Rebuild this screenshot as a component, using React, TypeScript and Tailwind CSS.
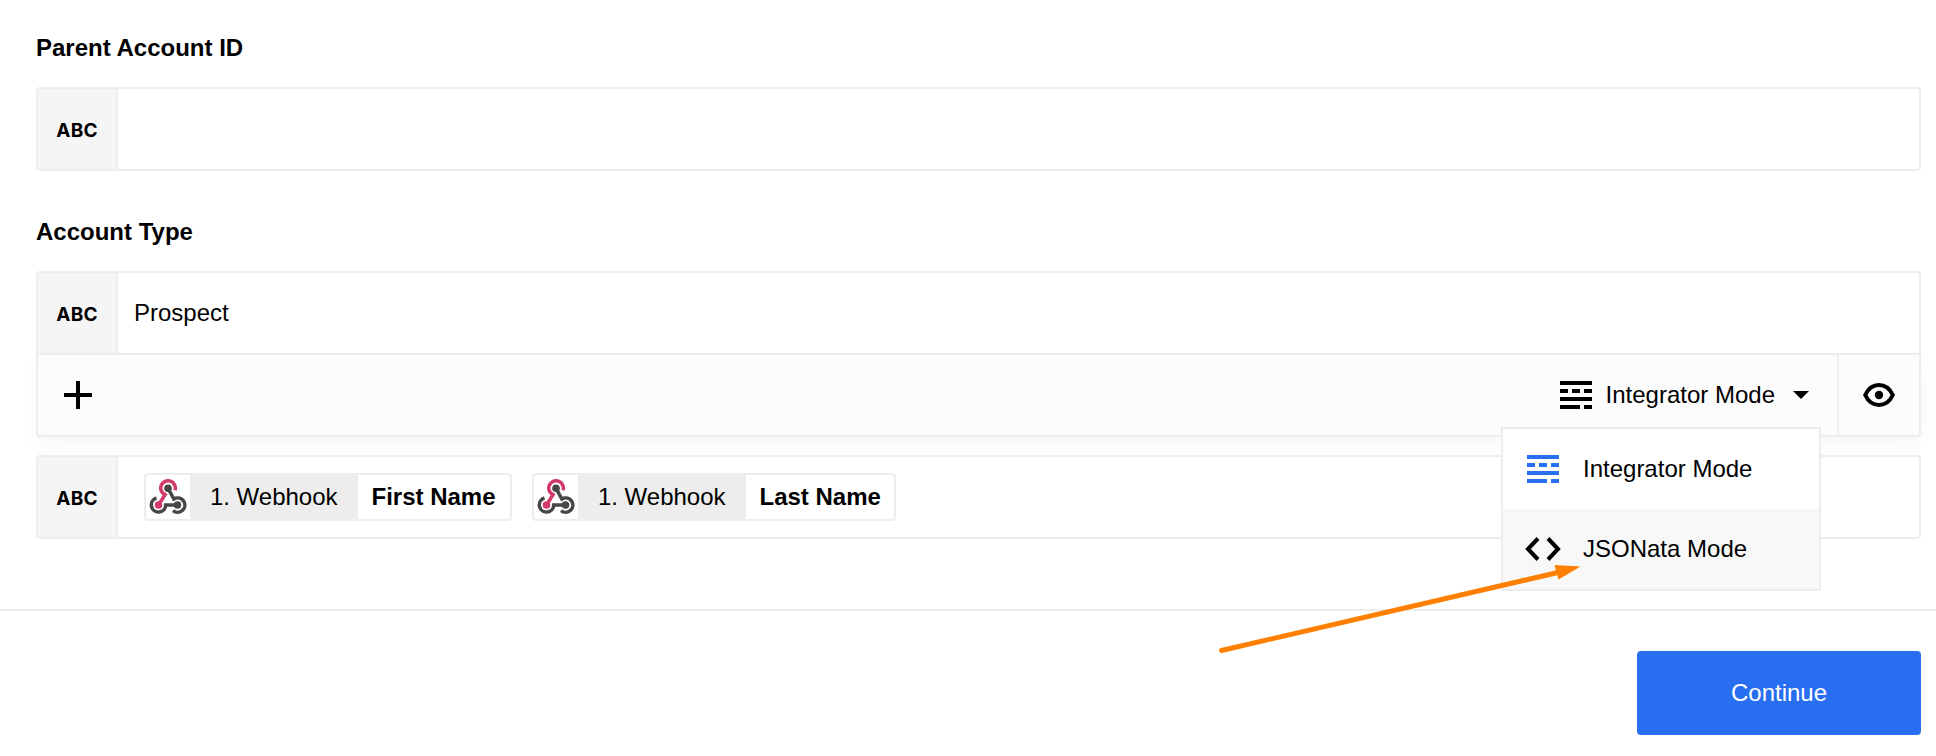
import type { ReactNode } from "react";

function ModeIcon({ className }: { className?: string }) {
  return (
    <svg width="33" height="28" viewBox="0 0 33 28" fill="currentColor" shapeRendering="crispEdges" className={className}>
      <path d="M0 0h32v4H0zM0 8h8v4H0zM12 8h8v4h-8zM24 8h8v4h-8zM0 16h32v4H0zM0 24h20v4H0zM24 24h8v4h-8z" />
    </svg>
  );
}

function WebhookIcon() {
  return (
    <svg width="38" height="36" viewBox="0 0 38 36" fill="none" strokeWidth="3.5">
      <path d="M9.500 26 L16 15.700 A7.300 7.300 0 1 1 26 11.300" stroke="#d23a68" />
      <circle cx="9.500" cy="26" r="3.800" fill="#d23a68" />
      <path d="M7.500 19 A7.200 7.200 0 1 0 16.700 26 H28.500" stroke="#474747" />
      <path d="M19 9.200 L24.800 20 A7.200 7.200 0 1 1 24 31.600" stroke="#474747" />
      <circle cx="19" cy="9.200" r="3.800" fill="#474747" />
      <circle cx="28.500" cy="26" r="3.800" fill="#474747" />
    </svg>
  );
}

function TypeCell() {
  return (
    <div className="flex w-20 shrink-0 items-center justify-center rounded-l-[3px] border-r-2 border-[#ededed] bg-[#f5f5f5] pt-[3px] font-[Inter,sans-serif] text-[19px] font-bold tracking-[0.3px]">
      ABC
    </div>
  );
}

function Field({ children, className = "" }: { children?: ReactNode; className?: string }) {
  return (
    <div className={"flex h-[84px] border-2 border-[#ededed] bg-white " + className}>
      <TypeCell />
      <div className="flex grow items-center">{children}</div>
    </div>
  );
}

function Chip({ label, className }: { label: string; className: string }) {
  return (
    <div className={"flex h-12 overflow-hidden rounded-[4px] border-2 border-[#ededed] bg-white " + className}>
      <div className="flex w-11 shrink-0 items-center justify-center">
        <WebhookIcon />
      </div>
      <div className="flex w-[167.5px] shrink-0 items-center justify-center bg-[#ededed]">1. Webhook</div>
      <div className="flex grow items-center pl-[14px] font-bold">{label}</div>
    </div>
  );
}

export default function App() {
  return (
    <div className="relative h-[756px] w-[1936px] overflow-hidden bg-white font-['Liberation_Sans',Arial,sans-serif] text-2xl leading-8 text-black">
      <div className="flex h-[611px] flex-col border-b-2 border-[#ededed] pr-[15px] pl-9">
        <h2 className="mt-8 font-bold">Parent Account ID</h2>
        <Field className="mt-[23px] rounded-[4px]" />
        <h2 className="mt-[45px] font-bold">Account Type</h2>
        <Field className="mt-[23px] rounded-t-[4px]">
          <span className="pl-4">Prospect</span>
        </Field>
        <div className="z-10 flex h-[82px] shrink-0 rounded-b-[4px] border-2 border-t-0 border-[#ededed] bg-[#fcfcfc] shadow-[0_6px_20px_rgba(0,0,0,0.04)] [clip-path:inset(0_-40px_-18px_-40px)]">
          <div className="flex w-20 items-center justify-center">
            <svg width="28" height="28" viewBox="0 0 28 28" shapeRendering="crispEdges">
              <path d="M12 0h4v12h12v4H16v12h-4V16H0v-4h12z" />
            </svg>
          </div>
          <div className="ml-auto flex items-center pr-7">
            <ModeIcon />
            <span className="ml-[13px]">Integrator Mode</span>
            <svg width="16" height="8" viewBox="0 0 16 8" className="ml-[18px]">
              <path d="M0 0h16L8 8z" />
            </svg>
          </div>
          <div className="flex w-[82px] items-center justify-center border-l-2 border-[#ededed]">
            <svg width="34" height="26" viewBox="0 0 34 26">
              <path d="M3.200 13C6 7 10.500 3 17 3s11 4 13.800 10c-2.800 6-7.300 10-13.800 10S6 19 3.200 13z" fill="none" stroke="#000" strokeWidth="4" />
              <circle cx="17" cy="13" r="4.200" />
            </svg>
          </div>
        </div>
        <Field className="mt-[18px] rounded-[4px]">
          <Chip label="First Name" className="ml-[26px] w-[368px]" />
          <Chip label="Last Name" className="ml-5 w-[364px]" />
        </Field>
      </div>
      <div className="flex justify-end pt-10 pr-[15px]">
        <button className="h-[84px] w-[284px] rounded-[4px] bg-[#286ef1] text-white">Continue</button>
      </div>

      <div className="absolute top-[427px] left-[1501px] z-20 flex h-[164px] w-80 flex-col border-2 border-[#ededed] bg-white">
        <div className="flex h-20 items-center pl-6">
          <ModeIcon className="text-[#286ef1]" />
          <span className="ml-[23px]">Integrator Mode</span>
        </div>
        <div className="flex h-20 items-center bg-[#f8f8f8] pl-[22px]">
          <svg width="36" height="24" viewBox="0 0 36 24" fill="none" stroke="#000" strokeWidth="4">
            <path d="M13 1.500 3 12l10 10.500M23 1.500 33 12 23 22.500" />
          </svg>
          <span className="ml-[22px]">JSONata Mode</span>
        </div>
      </div>

      <svg width="370" height="100" viewBox="0 0 370 100" className="absolute top-[560px] left-[1215px] z-30">
        <path d="M6.500 90.500 345 12" stroke="#ff8000" strokeWidth="5" strokeLinecap="round" />
        <path d="M339.500 5 365.500 6.500 343.500 19.500z" fill="#ff8000" />
      </svg>
    </div>
  );
}
